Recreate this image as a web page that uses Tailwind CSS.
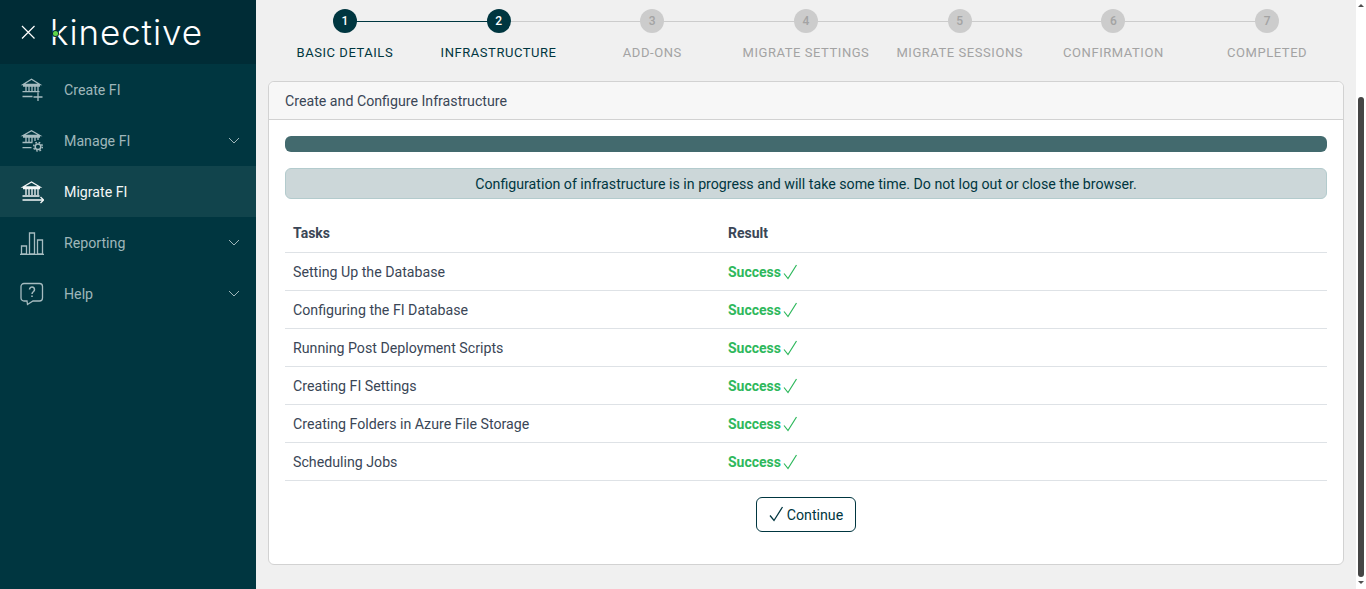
<!DOCTYPE html>
<html lang="en">

<head>
  <meta charset="UTF-8" />
  <title>Create and Configure Infrastructure</title>
  <script src="https://cdn.jsdelivr.net/npm/@tailwindcss/browser@4"></script>
</head>

<body class="h-[589px] overflow-hidden bg-[#f0f0f0] font-['Roboto',sans-serif] text-[14.2px] text-[#3a4656]">
  <div class="flex h-[589px]">
    <!-- Sidebar -->
    <aside class="w-[256px] shrink-0 bg-[#003640] text-[14.2px] text-[#9fb6ba]">
      <div class="relative flex h-[64px] items-center bg-[#002c36] pl-[21px]">
        <svg width="14" height="14" viewBox="0 0 14 14" fill="none" stroke="#fff" stroke-width="1.2">
          <path d="M1 1l12.5 12.5M13.5 1L1 13.5" />
        </svg>
        <span class="ml-[15px] font-['Inter',sans-serif] text-[35px] font-light leading-none tracking-[0.9px] text-white">kinective</span>
        <span class="absolute left-[53px] top-[31px] h-[5px] w-[5px] rounded-full bg-[#5fd64a] ring-1 ring-[#002c36]"></span>
      </div>

      <a class="flex h-[51px] items-center pl-[20px]">
        <svg class="w-[24px]" width="24" height="24" viewBox="0 0 24 24" fill="none" stroke="#a6bcc0" stroke-width="1.3">
          <path d="M3 6.5L11.5 1.3 20 6.5zM3 8h17M6 8v5.500M9 8v5.500M12 8v5.500M15 8v5.500M18 8v5.500M2.500 13.700h17M2.500 18.500h10M18 14.500v8.500M13.500 19h9" />
        </svg>
        <span class="ml-[20px] pt-[2px]">Create FI</span>
      </a>
      <a class="flex h-[51px] items-center pl-[20px] pr-[16px]">
        <svg class="w-[24px]" width="24" height="24" viewBox="0 0 24 24" fill="none" stroke="#a6bcc0" stroke-width="1.3">
          <path d="M3 6.5L11.5 1.7 20 6.500zM3 8h17M6 8v5M9 8v5M12 8v5M15 8v4M18 8v3M2.500 13.500h10M2.500 18.700h9" />
          <circle cx="18" cy="17.700" r="2.800" stroke-width="1.500" />
          <circle cx="18" cy="17.700" r="4.300" stroke-width="1.500" stroke-dasharray="1.700 1.700" />
        </svg>
        <span class="ml-[20px] flex-1 pt-[2px]">Manage FI</span>
        <svg width="12" height="7" viewBox="0 0 12 7" fill="none" stroke="#9fb6ba"><path d="M1 1l5 5 5-5" /></svg>
      </a>
      <a class="flex h-[51px] items-center bg-[#11444c] pl-[20px] text-[#f4f7f7]">
        <svg class="w-[24px]" width="24" height="24" viewBox="0 0 24 24" fill="none" stroke="#f4f7f7" stroke-width="1.3">
          <path d="M3 7L11.5 2 20 7zM3 8.500h17M6 8.500V15M9 8.500V15M12 8.500V15M15 8.500V15M18 8.500V15M2.500 16h17M2.500 20h21M20.500 17l3 3-3 3" />
        </svg>
        <span class="ml-[20px] pt-[2px]">Migrate FI</span>
      </a>
      <a class="flex h-[51px] items-center pl-[20px] pr-[16px]">
        <svg class="w-[24px]" width="24" height="24" viewBox="0 0 24 24" fill="none" stroke="#a6bcc0" stroke-width="1.3">
          <path d="M1.500 15h5v8h-5zM9.500 2h5v21h-5zM17.500 9h5v14h-5zM0 23.500h24" />
        </svg>
        <span class="ml-[20px] flex-1 pt-[2px]">Reporting</span>
        <svg width="12" height="7" viewBox="0 0 12 7" fill="none" stroke="#9fb6ba"><path d="M1 1l5 5 5-5" /></svg>
      </a>
      <a class="flex h-[51px] items-center pl-[20px] pr-[16px]">
        <svg class="w-[24px]" width="24" height="24" viewBox="0 0 24 24" fill="none" stroke="#a6bcc0" stroke-width="1.3">
          <path d="M4 1.500h15.500a3 3 0 0 1 3 3V16a3 3 0 0 1-3 3H13l-5.500 3.500L7 19H4a3 3 0 0 1-3-3V4.500a3 3 0 0 1 3-3z" />
          <path d="M9.500 7.500a2.500 2.500 0 1 1 4 2c-1 .7-1.500 1.200-1.500 2.500M12 13.500V15" stroke-width="1.500" />
        </svg>
        <span class="ml-[20px] flex-1 pt-[2px]">Help</span>
        <svg width="12" height="7" viewBox="0 0 12 7" fill="none" stroke="#9fb6ba"><path d="M1 1l5 5 5-5" /></svg>
      </a>
    </aside>

    <!-- Main -->
    <main class="flex-1 px-[12px]">
      <!-- Stepper -->
      <div class="grid h-[81px] grid-cols-7 text-center text-[13px] uppercase tracking-[0.55px] text-[#a3a3a3]">
        <div class="relative pt-[9px] text-[#003640]">
          <div class="absolute left-1/2 top-[21px] h-px w-full bg-[#003640]"></div>
          <div class="relative mx-auto flex h-[24px] w-[24px] items-center justify-center rounded-full bg-[#003640] text-[12px] font-medium tracking-normal text-white">1</div>
          <div class="mt-[12px] leading-[15px]">Basic Details</div>
        </div>
        <div class="relative pt-[9px] text-[#003640]">
          <div class="absolute left-1/2 top-[21px] h-px w-full bg-[#cccccc]"></div>
          <div class="relative mx-auto flex h-[24px] w-[24px] items-center justify-center rounded-full bg-[#003640] text-[12px] font-medium tracking-normal text-white">2</div>
          <div class="mt-[12px] leading-[15px]">Infrastructure</div>
        </div>
        <div class="relative pt-[9px]">
          <div class="absolute left-1/2 top-[21px] h-px w-full bg-[#cccccc]"></div>
          <div class="relative mx-auto flex h-[24px] w-[24px] items-center justify-center rounded-full bg-[#cccccc] text-[12px] font-medium tracking-normal text-[#a3a3a3]">3</div>
          <div class="mt-[12px] leading-[15px]">Add-ons</div>
        </div>
        <div class="relative pt-[9px]">
          <div class="absolute left-1/2 top-[21px] h-px w-full bg-[#cccccc]"></div>
          <div class="relative mx-auto flex h-[24px] w-[24px] items-center justify-center rounded-full bg-[#cccccc] text-[12px] font-medium tracking-normal text-[#a3a3a3]">4</div>
          <div class="mt-[12px] leading-[15px]">Migrate Settings</div>
        </div>
        <div class="relative pt-[9px]">
          <div class="absolute left-1/2 top-[21px] h-px w-full bg-[#cccccc]"></div>
          <div class="relative mx-auto flex h-[24px] w-[24px] items-center justify-center rounded-full bg-[#cccccc] text-[12px] font-medium tracking-normal text-[#a3a3a3]">5</div>
          <div class="mt-[12px] leading-[15px]">Migrate Sessions</div>
        </div>
        <div class="relative pt-[9px]">
          <div class="absolute left-1/2 top-[21px] h-px w-full bg-[#cccccc]"></div>
          <div class="relative mx-auto flex h-[24px] w-[24px] items-center justify-center rounded-full bg-[#cccccc] text-[12px] font-medium tracking-normal text-[#a3a3a3]">6</div>
          <div class="mt-[12px] leading-[15px]">Confirmation</div>
        </div>
        <div class="relative pt-[9px]">
          <div class="relative mx-auto flex h-[24px] w-[24px] items-center justify-center rounded-full bg-[#cccccc] text-[12px] font-medium tracking-normal text-[#a3a3a3]">7</div>
          <div class="mt-[12px] leading-[15px]">Completed</div>
        </div>
      </div>

      <!-- Card -->
      <div class="h-[484px] rounded-[6px] border border-[#d2d2d2] bg-white">
        <div class="flex h-[38px] items-center rounded-t-[6px] border-b border-[#d2d2d2] bg-[#f7f7f7] px-[16px] pt-[2px]">Create and Configure Infrastructure</div>
        <div class="px-[16px] pt-[16px]">
          <div class="h-[16px] rounded-[6px] bg-[#436a6e]"></div>
          <div class="mt-[16px] flex h-[31px] items-center justify-center rounded-[6px] border border-[#b3cbcd] bg-[#ccd7d9] pt-[2px] text-[#003640]">Configuration of infrastructure is in progress and will take some time. Do not log out or close the browser.</div>

          <table class="mt-[15px] w-full table-fixed">
            <thead>
              <tr class="h-[38px] border-b border-[#dee2e6] text-left text-[14px] font-bold">
                <th class="w-[443px] pl-[8px] pt-[2px]">Tasks</th>
                <th class="pt-[2px]">Result</th>
              </tr>
            </thead>
            <tbody>
              <tr class="h-[38px] border-b border-[#dee2e6]">
                <td class="pl-[8px] pt-[3px]">Setting Up the Database</td>
                <td class="pt-[2px]">
                  <div class="flex items-center text-[14px] font-bold text-[#2eb85c]">Success
                    <svg class="ml-[2px] mt-[-1px]" width="15" height="16" viewBox="0 0 15 16" fill="none" stroke="#2eb85c" stroke-width="1.2"><path d="M1 9.500l4 5L13.500 1" /></svg>
                  </div>
                </td>
              </tr>
              <tr class="h-[38px] border-b border-[#dee2e6]">
                <td class="pl-[8px] pt-[3px]">Configuring the FI Database</td>
                <td class="pt-[2px]">
                  <div class="flex items-center text-[14px] font-bold text-[#2eb85c]">Success
                    <svg class="ml-[2px] mt-[-1px]" width="15" height="16" viewBox="0 0 15 16" fill="none" stroke="#2eb85c" stroke-width="1.2"><path d="M1 9.500l4 5L13.500 1" /></svg>
                  </div>
                </td>
              </tr>
              <tr class="h-[38px] border-b border-[#dee2e6]">
                <td class="pl-[8px] pt-[3px]">Running Post Deployment Scripts</td>
                <td class="pt-[2px]">
                  <div class="flex items-center text-[14px] font-bold text-[#2eb85c]">Success
                    <svg class="ml-[2px] mt-[-1px]" width="15" height="16" viewBox="0 0 15 16" fill="none" stroke="#2eb85c" stroke-width="1.2"><path d="M1 9.500l4 5L13.500 1" /></svg>
                  </div>
                </td>
              </tr>
              <tr class="h-[38px] border-b border-[#dee2e6]">
                <td class="pl-[8px] pt-[3px]">Creating FI Settings</td>
                <td class="pt-[2px]">
                  <div class="flex items-center text-[14px] font-bold text-[#2eb85c]">Success
                    <svg class="ml-[2px] mt-[-1px]" width="15" height="16" viewBox="0 0 15 16" fill="none" stroke="#2eb85c" stroke-width="1.2"><path d="M1 9.500l4 5L13.500 1" /></svg>
                  </div>
                </td>
              </tr>
              <tr class="h-[38px] border-b border-[#dee2e6]">
                <td class="pl-[8px] pt-[3px]">Creating Folders in Azure File Storage</td>
                <td class="pt-[2px]">
                  <div class="flex items-center text-[14px] font-bold text-[#2eb85c]">Success
                    <svg class="ml-[2px] mt-[-1px]" width="15" height="16" viewBox="0 0 15 16" fill="none" stroke="#2eb85c" stroke-width="1.2"><path d="M1 9.500l4 5L13.500 1" /></svg>
                  </div>
                </td>
              </tr>
              <tr class="h-[38px] border-b border-[#dee2e6]">
                <td class="pl-[8px] pt-[3px]">Scheduling Jobs</td>
                <td class="pt-[2px]">
                  <div class="flex items-center text-[14px] font-bold text-[#2eb85c]">Success
                    <svg class="ml-[2px] mt-[-1px]" width="15" height="16" viewBox="0 0 15 16" fill="none" stroke="#2eb85c" stroke-width="1.2"><path d="M1 9.500l4 5L13.500 1" /></svg>
                  </div>
                </td>
              </tr>
            </tbody>
          </table>

          <div class="mt-[16px] flex justify-center">
            <button class="flex h-[35px] w-[100px] items-center justify-center rounded-[6px] border border-[#003640] bg-white text-[#003640]">
              <svg class="mr-[3px]" width="15" height="16" viewBox="0 0 15 16" fill="none" stroke="#003640" stroke-width="1.3"><path d="M1 9.500l4 5L13.500 1" /></svg>
              <span class="pt-[3px]">Continue</span>
            </button>
          </div>
        </div>
      </div>
    </main>

    <!-- Scrollbar -->
    <div class="flex w-[10px] shrink-0 flex-col items-center bg-white">
      <div class="mt-[4px] h-0 w-0 border-x-[3px] border-b-[3px] border-x-transparent border-b-[#505050]"></div>
      <div class="mt-[90px] h-[480px] w-[6px] rounded-[3px] bg-[#454545]"></div>
      <div class="mt-[4px] h-0 w-0 border-x-[3px] border-t-[3px] border-x-transparent border-t-[#505050]"></div>
    </div>
  </div>
</body>

</html>
